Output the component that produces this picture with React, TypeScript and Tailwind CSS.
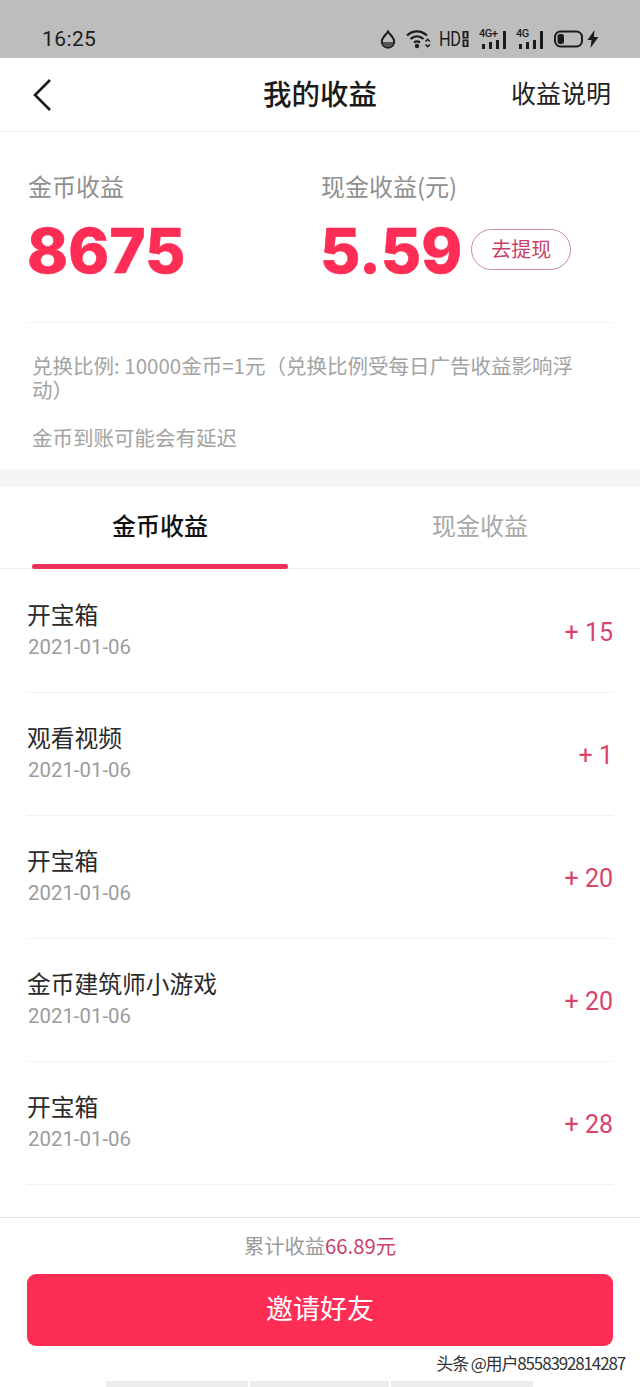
const font = { fontFamily: '"Noto Sans CJK SC", "Noto Sans", sans-serif' };

function StatusIcons() {
  return (
    <div className="flex items-center text-[#1c1c1c]">
      <svg width="16" height="20" viewBox="0 0 16 20" className="mr-[10px]">
        <path d="M8 2.5 C6 6 1.8 8.5 1.8 12.5 A6.2 6.2 0 0 0 14.2 12.5 C14.2 8.5 10 6 8 2.5Z" fill="none" stroke="#1c1c1c" strokeWidth="2" />
        <path d="M2.8 13 h10.4 A5.2 5.2 0 0 1 2.8 13Z" fill="#555" />
      </svg>
      <svg width="25" height="20" viewBox="0 0 25 20" className="mr-[8px]">
        <path d="M1 6.5 C7 1 15 1 21 6.5" fill="none" stroke="#1c1c1c" strokeWidth="2.2" />
        <path d="M4.5 10 C8.5 6.5 13.5 6.5 17.5 10" fill="none" stroke="#1c1c1c" strokeWidth="2.2" />
        <path d="M8 13.5 C10 12 12 12 14 13.5" fill="none" stroke="#1c1c1c" strokeWidth="2.2" />
        <circle cx="11" cy="17" r="2.2" fill="#1c1c1c" />
        <path d="M19.5 12.5 l2.2 -2.2 l2.2 2.2 M19.5 15.5 l2.2 2.2 l2.2 -2.2" fill="none" stroke="#1c1c1c" strokeWidth="1.6" />
      </svg>
      <span className="w-[22px] whitespace-nowrap text-[20px] leading-none tracking-[-0.5px] scale-x-[0.82] origin-left mr-[1px]" style={{ fontFamily: '"Roboto", sans-serif' }}>HD</span>
      <svg width="7" height="18" viewBox="0 0 7 18" className="mr-[10px]">
        <rect x="0.5" y="1" width="6" height="7.5" fill="#1c1c1c" />
        <rect x="0.5" y="9.5" width="6" height="7.5" fill="#1c1c1c" />
        <rect x="2.5" y="2.5" width="2" height="4.5" fill="#bdbdbd" />
        <rect x="2.5" y="11" width="2" height="4.5" fill="#bdbdbd" />
      </svg>
      <SignalIcon label="4G+" />
      <div className="w-[10px]" />
      <SignalIcon label="4G" />
      <div className="w-[11px]" />
      <svg width="29" height="18" viewBox="0 0 29 18">
        <rect x="1" y="1.5" width="27" height="15" rx="5.5" fill="none" stroke="#1c1c1c" strokeWidth="2" />
        <rect x="3.5" y="4" width="6.5" height="10" rx="2.5" fill="#1c1c1c" />
      </svg>
      <svg width="12" height="20" viewBox="0 0 12 20" className="ml-[4px]">
        <path d="M7.5 1 L0.5 11 H4.5 L3.5 19 L11.5 8 H7 Z" fill="#1c1c1c" />
      </svg>
    </div>
  );
}

function SignalIcon({ label }: { label: string }) {
  return (
    <div className="relative w-[27px] h-[20px]">
      <span className="absolute left-0 top-0 text-[11px] leading-[10px] font-medium tracking-[-0.5px]" style={{ fontFamily: '"Roboto", sans-serif' }}>{label}</span>
      <div className="absolute left-[3px] bottom-0 flex items-end gap-[4px]">
        <div className="w-[3px] h-[5px] bg-[#1c1c1c]" />
        <div className="w-[3px] h-[7px] bg-[#1c1c1c]" />
        <div className="w-[3px] h-[9px] bg-[#1c1c1c]" />
        <div className="w-[3px] h-[18px] bg-[#1c1c1c]" />
      </div>
    </div>
  );
}

const rows = [
  ['开宝箱', '+ 15'],
  ['观看视频', '+ 1'],
  ['开宝箱', '+ 20'],
  ['金币建筑师小游戏', '+ 20'],
  ['开宝箱', '+ 28'],
];

const bigNumber = { fontFamily: '"Inter", sans-serif', WebkitTextStroke: '0.5px #fe2d55' };

export default function App() {
  return (
    <div className="w-[640px] h-[1387px] bg-white flex flex-col overflow-hidden relative" style={font}>
      <div className="h-[58px] bg-[#bdbdbd] flex items-end justify-between pl-[42px] pr-[41px] pb-[9px] shrink-0">
        <span className="text-[21px] leading-[24px] text-[#1c1c1c] tracking-[0.4px] translate-y-[2px]" style={{ fontFamily: '"Roboto", sans-serif' }}>16:25</span>
        <StatusIcons />
      </div>

      <div className="h-[74px] shrink-0 border-b border-[#eeeeee] flex items-center justify-between pl-[32px] pr-[29px] relative">
        <svg width="20" height="34" viewBox="0 0 20 34">
          <path d="M18 2 L3 17 L18 32" fill="none" stroke="#1a1a1a" strokeWidth="2.6" />
        </svg>
        <span className="absolute left-0 right-0 top-[16px] text-center text-[28.5px] leading-[38px] font-medium text-[#1a1a1a] pointer-events-none">我的收益</span>
        <span className="text-[25px] leading-[36px] text-[#222] -mt-[5px]">收益说明</span>
      </div>

      <div className="px-[27px] pt-[38px] shrink-0">
        <div className="flex h-[153px] border-b border-[#f2f2f2]">
          <div className="w-[293px]">
            <div className="text-[24px] leading-[32px] text-[#8f8f8f] pl-[1px]">金币收益</div>
            <div className="text-[62px] leading-[78px] font-extrabold text-[#fe2d55] mt-[10px]" style={bigNumber}>8675</div>
          </div>
          <div>
            <div className="text-[24px] leading-[32px] text-[#8f8f8f] pl-[1px]">现金收益(元)</div>
            <div className="flex items-center mt-[10px]">
              <div className="text-[62px] leading-[78px] font-extrabold text-[#fe2d55]" style={bigNumber}>5.59</div>
              <div className="ml-[9px] mb-[4px] w-[100px] h-[41px] rounded-full border border-[#c98a9c] flex items-center justify-center text-[20px] text-[#c93f67]">去提现</div>
            </div>
          </div>
        </div>
      </div>

      <div className="px-[32px] pt-[30px] text-[#a3a3a3] text-[20.5px] leading-[24px] shrink-0 h-[146px]">
        <p className="pr-[24px]">兑换比例: 10000金币=1元（兑换比例受每日广告收益影响浮动）</p>
        <p className="mt-[24px]">金币到账可能会有延迟</p>
      </div>

      <div className="h-[18px] bg-[#f4f5f5] shrink-0" />

      <div className="h-[82px] shrink-0 flex border-b border-[#eeeeee] relative">
        <div className="w-1/2 flex justify-center pt-[21px] text-[24px] leading-[34px] font-medium text-[#111]">金币收益</div>
        <div className="w-1/2 flex justify-center pt-[21px] text-[24px] leading-[34px] text-[#a8a8a8]">现金收益</div>
        <div className="absolute left-[32px] -bottom-px w-[256px] h-[5px] rounded-full bg-[#ec3259]" />
      </div>

      <div className="px-[27px] pt-[1px] shrink-0">
        {rows.map(([title, value], i) => (
          <div key={i} className="h-[123px] border-b border-[#f2f2f2] flex items-center justify-between">
            <div className="flex flex-col">
              <span className="text-[23.75px] leading-[32px] text-[#2a2a2a] -mt-[3px]">{title}</span>
              <span className="text-[20.4px] leading-[28px] text-[#9c9c9c] mt-[3px] pl-[1px]" style={{ fontFamily: '"Roboto", sans-serif' }}>2021-01-06</span>
            </div>
            <span className="text-[25px] leading-[32px] text-[#d9446b] mt-[4px]" style={{ fontFamily: '"Roboto", sans-serif' }}>{value}</span>
          </div>
        ))}
      </div>

      <div className="mt-auto border-t border-[#e8e8e8] h-[170px] shrink-0 flex flex-col items-center relative">
        <div className="pt-[13px] text-[20.3px] leading-[28px] text-[#9a9a9a]">累计收益<span className="text-[#c93f67]">66.89元</span></div>
        <div className="mt-[15px] w-[586px] h-[72px] rounded-[9px] bg-[#fe2d55] flex items-center justify-center text-[27px] text-white pb-[3px]">邀请好友</div>
        <div className="absolute right-[15px] top-[132px] text-[17px] leading-[26px] tracking-[-1.15px] text-[#333]" style={{ textShadow: '0 0 2px #fff, 0 0 2px #fff' }}>头条 @用户8558392814287</div>
        <div className="absolute left-[106px] bottom-0 flex gap-[2px] h-[6px]">
          <div className="w-[142px] bg-[#ececec]" />
          <div className="w-[139px] bg-[#ececec]" />
          <div className="w-[142px] bg-[#ececec]" />
        </div>
      </div>
    </div>
  );
}
